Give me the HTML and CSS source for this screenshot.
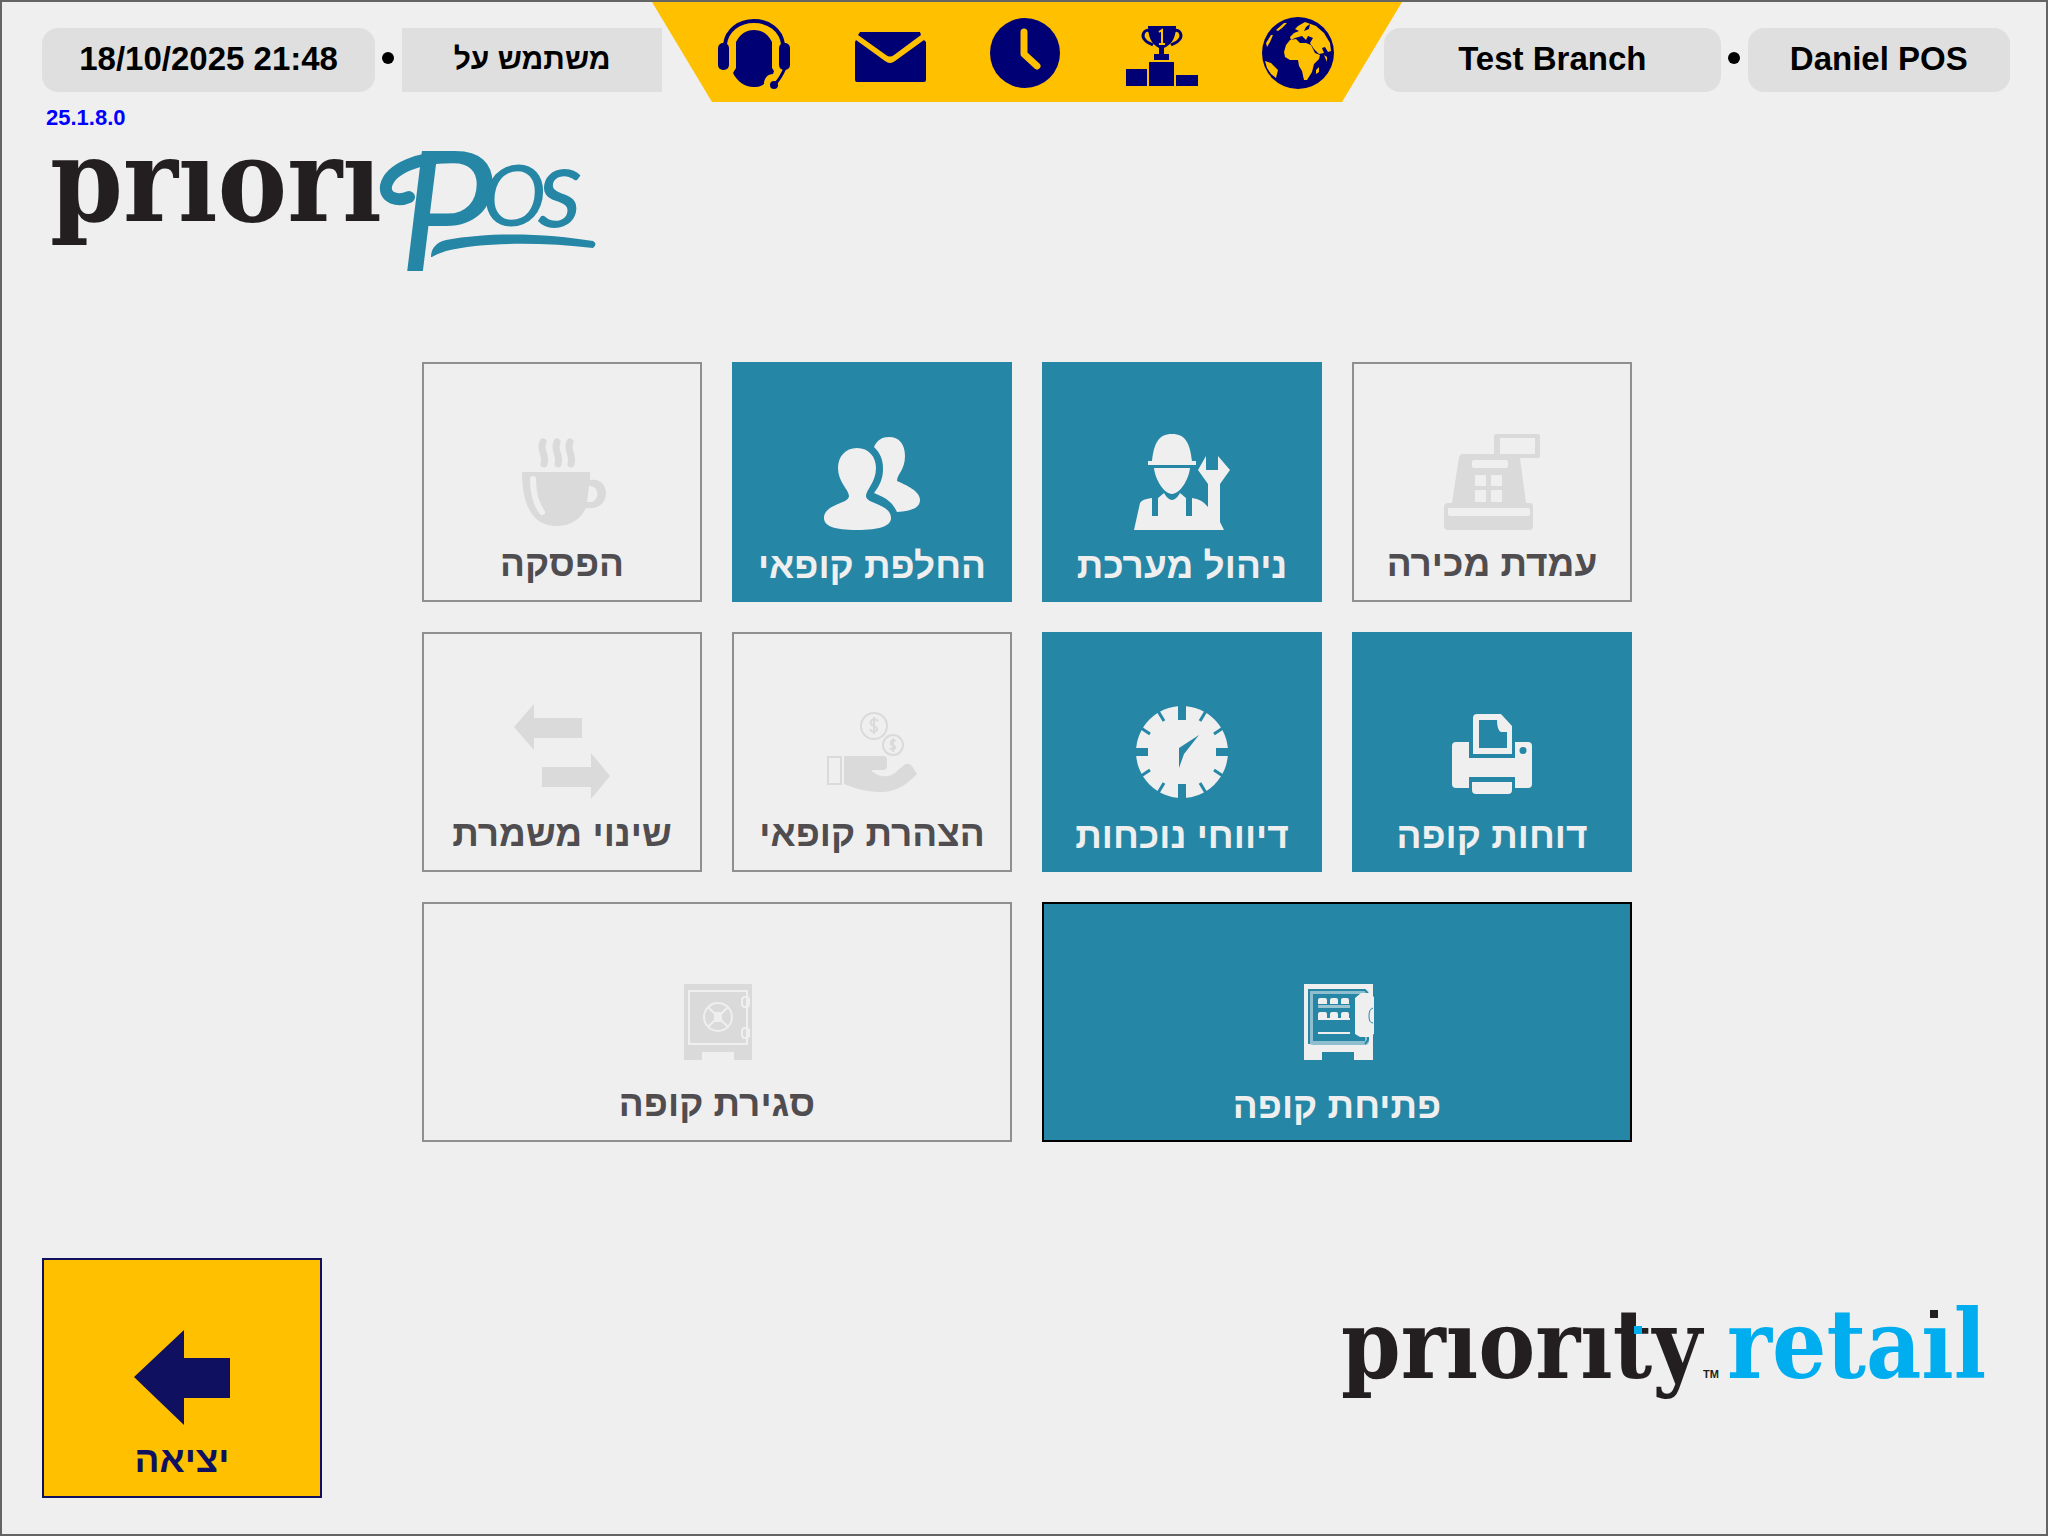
FILE: index.html
```html
<!DOCTYPE html>
<html lang="he">
<head>
<meta charset="utf-8">
<title>prioriPOS</title>
<link rel="stylesheet" href="styles.css">
</head>
<body>
<div class="app">
  <header class="topbar">
    <div class="status status-start">
      <span class="pill pill-wide">18/10/2025 21:48</span>
      <span class="dot"></span>
      <span class="pill pill-square" dir="rtl">משתמש על</span>
    </div>
    <nav class="tools">
      <button class="tool" type="button" aria-label="תמיכה">
        <svg viewBox="0 0 72 72">
          <path d="M7 26C9 12 21 3 36 3s27 9 29 23" fill="none" stroke="currentColor" stroke-width="4"/>
          <rect x="0" y="25" width="11" height="27" rx="5"/>
          <rect x="61" y="25" width="11" height="27" rx="5"/>
          <path d="M18 24C22 16 28 12 36 12s14 4 18 12V50L56 53L55 56C50 56 46 60 46 66C42 69 39 69 36 69C26 69 19 63 15 55L18 50Z"/>
          <path d="M67 50C64 57 61 62 57 66" fill="none" stroke="currentColor" stroke-width="3"/>
          <circle cx="56" cy="67" r="4"/>
        </svg>
      </button>
      <button class="tool" type="button" aria-label="הודעות">
        <svg viewBox="0 0 72 72">
          <path d="M6 14H66L67 17L40 37Q36 40 32 37L4 17Z"/>
          <path d="M2 22L31 43Q36 47 41 43L70 22L72 24V62Q72 64 70 64H3Q1 64 1 62V24Z"/>
        </svg>
      </button>
      <button class="tool" type="button" aria-label="שעון">
        <svg viewBox="0 0 72 72">
          <circle cx="35" cy="35" r="35"/>
          <path d="M34 14V36L47 48" fill="none" stroke="#ffc000" stroke-width="7" stroke-linecap="round" stroke-linejoin="round"/>
        </svg>
      </button>
      <button class="tool" type="button" aria-label="הישגים">
        <svg viewBox="0 0 72 72">
          <path d="M0 51H21V68H0ZM23 44H48V68H23ZM50 57H72V68H50Z"/>
          <path d="M22 8H50C50 18 47 26 38 30V36H43V42H28V36H33V30C25 26 22 18 22 8Z"/>
          <path d="M24 13C18 10 15 18 19 22C21 25 24 25 27 27M48 13C54 10 57 18 53 22C51 25 48 25 45 27" fill="none" stroke="currentColor" stroke-width="3"/>
          <path d="M33 14L36 12V26M33 26H39" fill="none" stroke="#ffc000" stroke-width="2"/>
        </svg>
      </button>
      <button class="tool" type="button" aria-label="שפה">
        <svg viewBox="0 0 72 72">
          <circle cx="36" cy="35" r="36"/>
          <g fill="#ffc000">
            <path d="M22 34L24 27L28 22L34 21L38 25L44 25L49 27L53 35L58 37L57 41L52 46L50 54L45 62L42 62L40 53L37 48L36 42L28 42L23 39Z"/>
            <path d="M36 8L43 4L54 8L62 15L68 25L69 33L66 34L63 29L60 30L62 35L57 36L52 31L48 25L51 20L46 18L44 22L40 18L33 20L29 22L28 19L32 15L37 13L33 11Z"/>
            <path d="M3 43L9 45L16 52L15 56L14 60L9 56L5 50ZM4 25L9 17L11 17L8 24L5 29ZM14 12L22 5L25 5L20 10L16 13ZM54 52L57 49L57 54L54 56ZM62 37L65 39L65 44Z"/>
          </g>
          <path d="M44 9L48 6L47 11L42 13Z"/>
        </svg>
      </button>
    </nav>
    <div class="status status-end">
      <span class="pill pill-wide">Test Branch</span>
      <span class="dot"></span>
      <span class="pill">Daniel POS</span>
    </div>
  </header>

  <section class="product">
    <div class="version">25.1.8.0</div>
    <svg class="product-logo" viewBox="0 0 560 144" role="img" aria-label="prioriPOS">
      <text class="logo-slab" x="8" y="91" font-size="116">prıorı</text>
      <g class="logo-script">
        <text class="logo-letter" x="357" y="141" font-size="168">P</text>
        <text class="logo-letter" x="440" y="96" font-size="86">O</text>
        <text class="logo-letter" x="496" y="97" font-size="112">s</text>
        <path d="M367 67C356 72 342 68 344 56C348 38 378 27 410 27" fill="none" stroke="currentColor" stroke-width="12" stroke-linecap="round"/>
        <path d="M389 127C389 119 394 112 404 110C450 101 510 104 551 111Q556 114 551 118C500 112 440 112 404 121Q395 124 390 127Z"/>
      </g>
    </svg>
  </section>

  <main class="menu">
    <button class="tile" type="button" disabled>
      <svg class="icon" viewBox="0 0 96 96">
        <path d="M8 38H76V46C86 44 92 51 92 59C92 69 84 76 72 74C66 86 56 92 42 92C22 92 8 76 8 38ZM75 52L73 68H76C86 68 86 51 75 52Z" fill-rule="evenodd"/>
        <path d="M19 45C19 58 22 70 28 78" fill="none" stroke="#efefef" stroke-width="6" stroke-linecap="round"/>
        <path d="M29 8C25 17 33 20 30 30M43 8C39 17 47 20 44 30M56 8C52 17 60 20 57 30" fill="none" stroke="currentColor" stroke-width="7" stroke-linecap="round"/>
      </svg>
      <span class="label">הפסקה</span>
    </button>
    <button class="tile tile-on" type="button">
      <svg class="icon" viewBox="0 0 96 96">
        <path d="M33 14C45 14 52 23 52 34C52 48 42 56 42 62C42 70 67 70 67 84C67 92 56 96 33 96S0 92 0 84C0 70 25 70 25 62C25 56 14 48 14 34C14 23 21 14 33 14Z"/>
        <path d="M50 13C53 6 58 3 65 3C75 3 81 10 81 22C81 36 73 40 73 47C82 51 96 57 96 66C96 74 87 77 73 78C68 67 60 63 50 59C56 51 59 44 59 35C59 25 56 19 50 13Z"/>
      </svg>
      <span class="label">החלפת קופאי</span>
    </button>
    <button class="tile tile-on" type="button">
      <svg class="icon" viewBox="0 0 96 96">
        <path d="M14 27H18C20 10 24 0 38 0S56 10 58 27H62V31H14ZM20 34H56C55 45 46 60 38 60S21 45 20 34Z"/>
        <path d="M0 96L6 69Q8 65 18 64V82H24V64L30 59Q34 66 38 66T46 59L52 64V82H58V64Q68 65 74 73V50L64 36L72 22V36H84V22L96 36L86 50V88L90 96Z"/>
      </svg>
      <span class="label">ניהול מערכת</span>
    </button>
    <button class="tile" type="button" disabled>
      <svg class="icon" viewBox="0 0 96 96">
        <path fill-rule="evenodd" d="M52 0H94Q96 0 96 2V22Q96 24 94 24H76L82 69H86Q89 69 89 73V92Q89 96 85 96H4Q0 96 0 92V73Q0 69 4 69H8L15 23Q16 20 19 20H50V2Q50 0 52 0ZM56 4V20H91V4ZM30 26Q28 26 28 28V32Q28 34 30 34H62Q64 34 64 32V28Q64 26 62 26ZM31 41V52H42V41ZM47 41V52H58V41ZM31 56V68H42V56ZM47 56V68H58V56ZM5 74Q4 74 4 76V80Q4 82 6 82H84Q86 82 86 80V76Q86 74 84 74Z"/>
      </svg>
      <span class="label">עמדת מכירה</span>
    </button>
    <button class="tile" type="button" disabled>
      <svg class="icon" viewBox="0 0 96 96">
        <path d="M0 23L20 0V14H68V34H20V46ZM96 72L77 49V63H28V83H77V95Z"/>
      </svg>
      <span class="label">שינוי משמרת</span>
    </button>
    <button class="tile" type="button" disabled>
      <svg class="icon" viewBox="0 0 96 96">
        <path d="M20 52H60Q63 52 63 56V62Q63 66 59 66H47C54 74 66 74 72 68L80 61Q84 58 88 62L93 70C78 86 66 88 56 88C42 88 30 84 20 80Z"/>
        <g fill="none" stroke="currentColor" stroke-width="2">
          <rect x="4" y="53" width="13" height="27"/>
          <circle cx="50" cy="22" r="13"/>
          <circle cx="69" cy="41" r="10"/>
          <path d="M54 17C50 13 45 17 47 20C49 23 54 22 53 26C51 29 47 28 46 25M50 13V30M72 37C69 35 66 37 67 40C68 42 72 41 71 44C70 46 67 46 66 44M69 34V48"/>
        </g>
      </svg>
      <span class="label">הצהרת קופאי</span>
    </button>
    <button class="tile tile-on" type="button">
      <svg class="icon" viewBox="0 0 96 96">
        <circle cx="48" cy="48" r="46"/>
        <g stroke="#2586a6" fill="none">
          <path stroke-width="8" d="M48 0V16M48 80V96M0 48H14M82 48H96"/>
          <path stroke-width="3" d="M24 7L30 17M72 7L66 17M24 89L30 79M72 89L66 79M7 24L16 30M7 72L16 66M89 24L80 30M89 72L80 66"/>
        </g>
        <path fill="#2586a6" d="M65 31L45 44V64L50 50Z"/>
      </svg>
      <span class="label">דיווחי נוכחות</span>
    </button>
    <button class="tile tile-on" type="button">
      <svg class="icon" viewBox="0 0 96 96">
        <path fill-rule="evenodd" d="M33 10H57L68 22V50H29V14Q29 10 33 10ZM35 16V44H63V28H57Q53 26 53 16Z"/>
        <path fill-rule="evenodd" d="M12 38H25V54H71V38H84Q88 38 88 42V80Q88 84 84 84H71V73H25V84H12Q8 84 8 80V42Q8 38 12 38ZM79 43A3 3 0 1 0 79 50A3 3 0 1 0 79 43Z"/>
        <path d="M28 78H68V86Q68 90 64 90H32Q28 90 28 86Z"/>
      </svg>
      <span class="label">דוחות קופה</span>
    </button>
    <button class="tile tile-double" type="button" disabled>
      <svg class="icon" viewBox="0 0 96 96">
        <path d="M15 10H83V86H65V78H33V86H15Z"/>
        <g fill="none" stroke="#efefef" stroke-width="2">
          <rect x="20" y="17" width="58" height="53"/>
          <circle cx="49" cy="43" r="14"/>
          <path d="M39 33L59 53M59 33L39 53"/>
          <rect x="73" y="23" width="7" height="10" rx="3"/>
          <rect x="73" y="54" width="7" height="10" rx="3"/>
        </g>
        <rect x="45" y="38" width="8" height="10" fill="#efefef"/>
      </svg>
      <span class="label">סגירת קופה</span>
    </button>
    <button class="tile tile-double tile-on tile-focus" type="button">
      <svg class="icon" viewBox="0 0 96 96">
        <path d="M15 10H84V86H65V78H33V86H15Z"/>
        <rect x="22" y="18" width="56" height="51" rx="2" fill="#2586a6" stroke="#8fbfcf" stroke-width="4"/>
        <path d="M20 70V16H76L79 20V66L76 70" fill="none" stroke="#2586a6" stroke-width="2"/>
        <path d="M29 30V26Q29 24 31 24H36Q38 24 38 26V30ZM41 30V26Q41 24 43 24H47Q49 24 49 26V30ZM52 30V26Q52 24 54 24H58Q60 24 60 26V30ZM29 44V40Q29 38 31 38H36Q38 38 38 40V44ZM41 44V40Q41 38 43 38H47Q49 38 49 40V44ZM52 44V40Q52 38 54 38H58Q60 38 60 40V44ZM29 44H61V46H29ZM29 58H61V60H29Z"/>
        <path d="M29 31H61V34H29Z" opacity=".6"/>
        <path d="M66 24L72 19H80L85 23V60L80 63H71L66 60Z"/>
        <path d="M84 34Q80 35 80 42T84 49" fill="none" stroke="#2586a6" stroke-width="1"/>
      </svg>
      <span class="label">פתיחת קופה</span>
    </button>
  </main>

  <footer class="bottom">
    <button class="tile tile-exit" type="button">
      <svg class="icon" viewBox="0 0 96 96">
        <path d="M0 47L50 0V28H96V68H50V95Z"/>
      </svg>
      <span class="label">יציאה</span>
    </button>
    <svg class="brand-logo" viewBox="0 0 648 104" role="img" aria-label="priority retail">
      <text class="logo-slab" x="1" y="78" font-size="95">prıorıty</text>
      <text class="logo-tm" x="363" y="78" font-size="11">TM</text>
      <text class="logo-slab logo-blue" x="387" y="78" font-size="95">retaıl</text>
      <rect class="logo-blue" x="294" y="26" width="8" height="8"/>
      <rect class="logo-slab" x="590" y="10" width="8" height="8"/>
    </svg>
  </footer>
</div>
</body>
</html>
```
FILE: styles.css
```css
* {
  box-sizing: border-box;
}

body {
  margin: 0;
  background: #efefef;
  color: #000;
  font-family: "Liberation Sans", Arial, sans-serif;
}

button {
  margin: 0;
  padding: 0;
  border: 0;
  background: none;
  color: inherit;
  font: inherit;
}

svg {
  display: block;
  fill: currentColor;
  overflow: visible;
}

.app {
  display: flex;
  flex-direction: column;
  min-height: 100vh;
  border: 2px solid #646464;
}

/* Top bar */
.topbar {
  display: grid;
  grid-template-columns: 620fr 722fr 626fr;
  padding: 0 36px 0 40px;
}

.status {
  display: flex;
  align-items: center;
  height: 64px;
  margin-top: 26px;
}

.pill {
  display: flex;
  flex: 262;
  align-items: center;
  justify-content: center;
  height: 64px;
  padding-bottom: 2px;
  border-radius: 16px;
  background: #dfdfdf;
  font-size: 33px;
  font-weight: 700;
  white-space: nowrap;
}

.pill-wide {
  flex: 336;
}

.pill-square {
  border-radius: 0;
  font-size: 30px;
}

.dot {
  width: 12px;
  height: 12px;
  margin: 0 8px 4px 7px;
  border-radius: 6px;
  background: #000;
}

.tools {
  display: flex;
  justify-content: center;
  gap: 64px;
  height: 100px;
  margin: 0 -18px 0 -10px;
  padding: 16px 2px 0 0;
  background: #ffc000;
  clip-path: polygon(0 0, 100% 0, calc(100% - 60px) 100%, 60px 100%);
}

.tool {
  width: 72px;
  height: 72px;
  color: #000075;
}

/* Product name */
.product {
  padding: 4px 40px 0;
}

.version {
  padding-left: 4px;
  color: #00f;
  font-size: 22px;
  font-weight: 700;
  line-height: 24px;
}

.product-logo {
  width: 560px;
  height: 144px;
}

.logo-slab {
  fill: #231f20;
  font-family: "DejaVu Serif Condensed", "DejaVu Serif", serif;
  font-weight: 700;
}

.logo-script {
  color: #2586a6;
  font-family: Lato, sans-serif;
  font-style: italic;
}

.logo-letter {
  font-weight: 400;
}

.logo-tm {
  fill: #231f20;
  font-weight: 700;
}

.logo-blue {
  fill: #00aeef;
}

/* Tiles */
.menu {
  display: grid;
  grid-template-columns: repeat(4, 280px);
  grid-auto-rows: 240px;
  gap: 30px;
  justify-content: center;
  padding: 88px 0 40px 6px;
}

.tile {
  display: flex;
  flex-direction: column;
  align-items: center;
  width: 280px;
  height: 240px;
  padding-top: 70px;
  border: 2px solid #8f8f8f;
  color: #dadada;
}

.tile-double {
  grid-column: span 2;
  width: auto;
}

.tile-on {
  border-color: #2586a6;
  background: #2586a6;
  color: #efefef;
}

.tile-focus {
  border-color: #000;
}

.tile-exit {
  border-color: #101060;
  background: #ffc000;
  color: #101060;
}

.icon {
  width: 96px;
  height: 96px;
}

.label {
  margin-top: 12px;
  direction: rtl;
  font-family: "Liberation Sans", Arial, sans-serif;
  font-size: 37px;
  font-weight: 700;
  line-height: 48px;
  white-space: nowrap;
}

.tile:disabled .label,
.tile-exit .label {
  margin-top: 10px;
}

.tile:disabled .label {
  color: #4f4d4f;
}

/* Bottom */
.bottom {
  display: flex;
  justify-content: space-between;
  margin-top: auto;
  padding: 0 58px 36px 40px;
}

.brand-logo {
  width: 648px;
  height: 104px;
  margin-top: 42px;
}
```
